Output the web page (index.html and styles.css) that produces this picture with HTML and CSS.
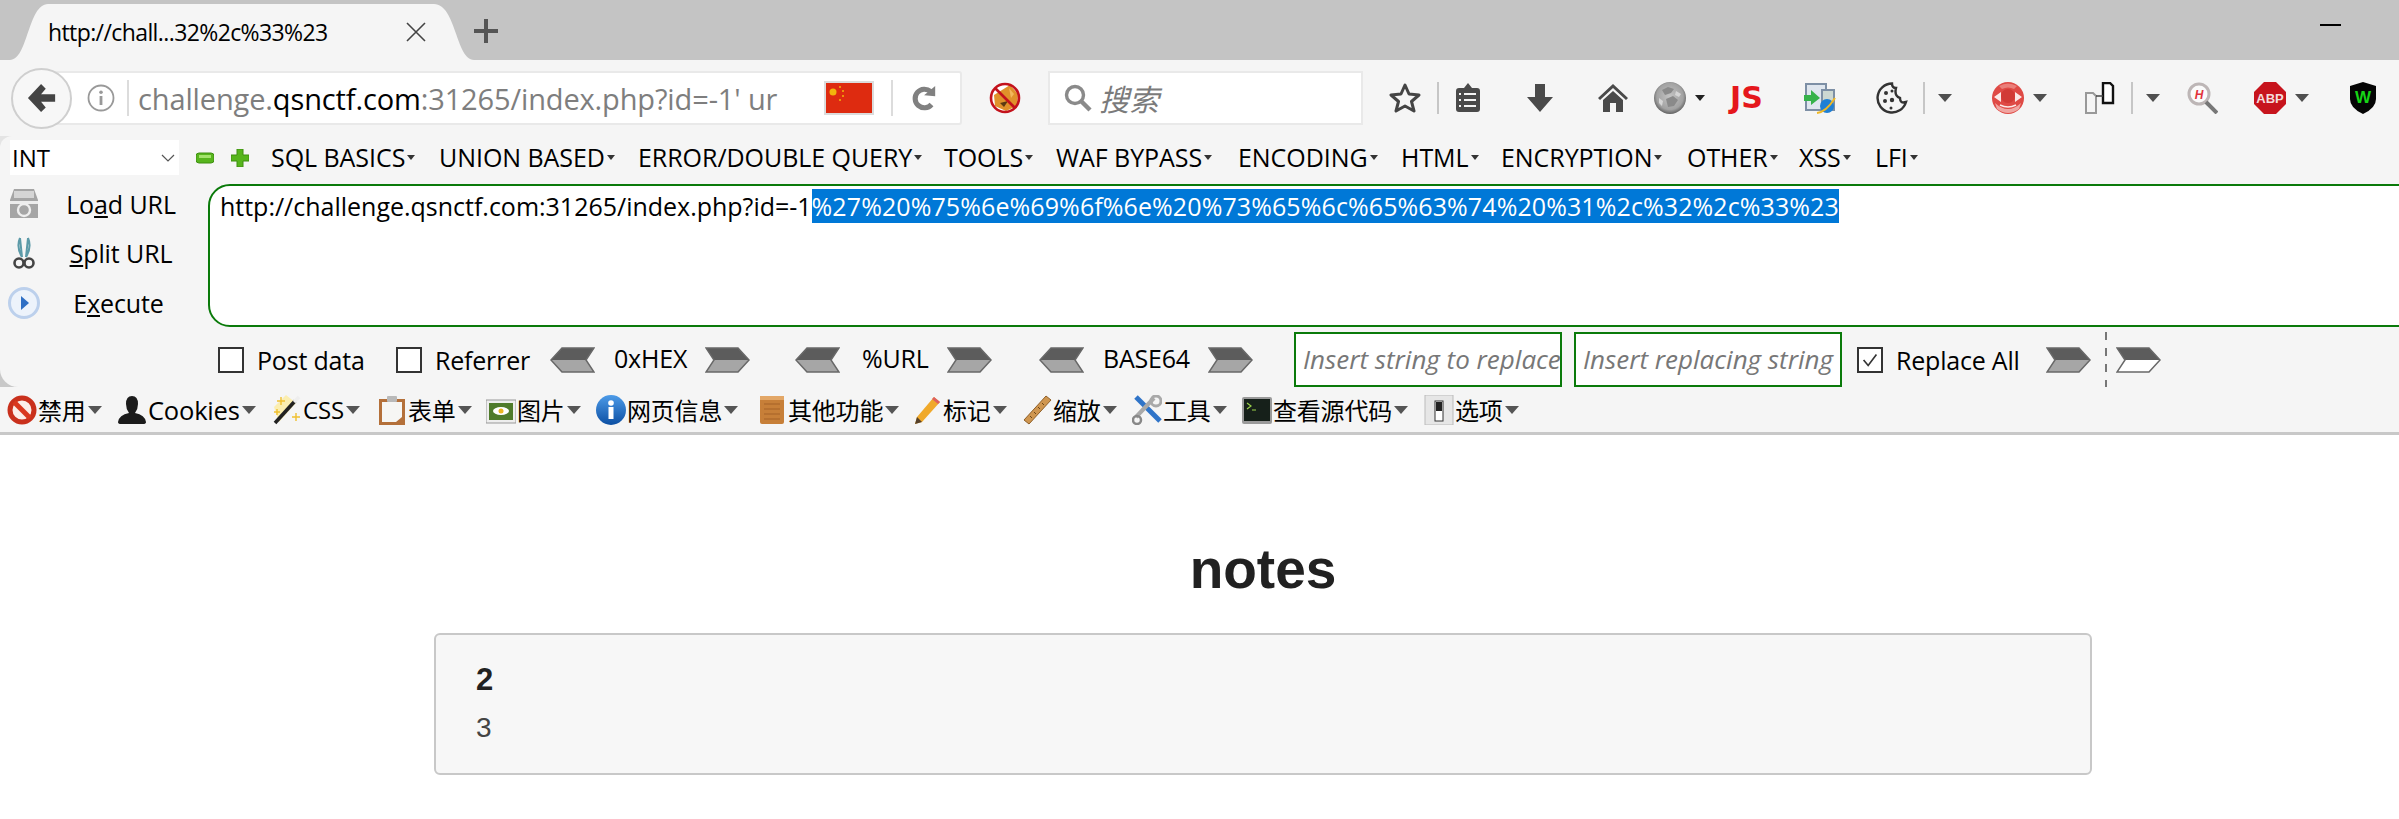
FILE: index.html
```html
<!DOCTYPE html>
<html lang="zh">
<head>
  <meta charset="UTF-8" />
  <title>notes</title>
  <link rel="stylesheet" href="styles.css">
</head>
<body>
  <!-- shared shapes for the hackbar encode arrows -->
  <svg class="defs" aria-hidden="true">
    <symbol id="chevron" viewBox="0 0 45 26">
      <path d="M1 1H33L44 13H9Z" fill="#5c5c5c"/>
      <path d="M9 13H44L33 25H1Z" fill="#a6a6a6"/>
      <path d="M1 1H33L44 13L33 25H1L9 13Z" fill="none" stroke="#686868" stroke-width="1.500"/>
    </symbol>
    <symbol id="chevron-flat" viewBox="0 0 45 26">
      <path d="M1 1H33L44 13H9Z" fill="#5c5c5c"/>
      <path d="M9 13H44L33 25H1Z" fill="#ffffff"/>
      <path d="M1 1H33L44 13L33 25H1L9 13Z" fill="none" stroke="#686868" stroke-width="1.500"/>
    </symbol>
  </svg>

  <!-- tab strip -->
  <div class="tabstrip">
    <div class="tab">
      <span class="tab-title">http://chall...32%2c%33%23</span>
      <svg class="tab-close" viewBox="0 0 20 20"><path d="M1 1L19 19M19 1L1 19" stroke="#444" stroke-width="1.6" fill="none"/></svg>
    </div>
    <svg class="new-tab" viewBox="0 0 24 24"><path d="M12 0V24M0 12H24" stroke="#555" stroke-width="4" fill="none"/></svg>
    <div class="minimize"></div>
  </div>

  <!-- nav bar -->
  <div class="navbar">
    <div class="back">
      <svg viewBox="0 0 32 32"><path d="M15 1L1 16L15 31L20 26L15 20H30V12H15L20 6Z" fill="#444"/></svg>
    </div>
    <div class="urlbar">
      <svg class="info" viewBox="0 0 28 28"><circle cx="14" cy="14" r="12.5" fill="none" stroke="#999" stroke-width="1.8"/><rect x="12.6" y="12" width="2.8" height="9" fill="#999"/><circle cx="14" cy="8.2" r="1.8" fill="#999"/></svg>
      <span class="url-sep"></span>
      <div class="url-text">challenge.<b>qsnctf.com</b>:31265/index.php?id=-1' ur</div>
      <svg class="flag" viewBox="0 0 50 34"><rect width="50" height="34" fill="#dcdcdc"/><rect x="2" y="2" width="46" height="30" fill="#de2b10"/><circle cx="9" cy="11" r="3.5" fill="#f2b50c"/><circle cx="16" cy="6" r="1" fill="#f2b50c"/><circle cx="19" cy="10" r="1" fill="#f2b50c"/><circle cx="19" cy="15" r="1" fill="#f2b50c"/><circle cx="16" cy="19" r="1" fill="#f2b50c"/></svg>
      <span class="url-sep"></span>
      <svg class="reload" viewBox="0 0 28 28"><path d="M20 7A10 10 0 1 0 21 21" fill="none" stroke="#808080" stroke-width="5.500"/><path d="M13 11L25 1V12Z" fill="#808080"/></svg>
    </div>
    <div class="noscript-slot">
      <svg class="ic" viewBox="0 0 32 32"><circle cx="16" cy="16" r="14" fill="#fff"/><path d="M5 13L13 8L21 3L29 12L28 24L17 29L6 24Z" fill="#e0912a"/><path d="M11 21L19 19L15 25Z" fill="#5b3a12"/><path d="M20 6L25 12L22 16Z" fill="#f3b75c"/><circle cx="16" cy="16" r="14" fill="none" stroke="#c3121c" stroke-width="2.600"/><path d="M6 6L26 26" stroke="#c3121c" stroke-width="2.600"/></svg>
    </div>
    <div class="searchbar">
      <svg class="search-ic" viewBox="0 0 28 28"><circle cx="11" cy="11" r="8.5" fill="none" stroke="#8a8a8a" stroke-width="3.4"/><path d="M17 17L26 26" stroke="#8a8a8a" stroke-width="4.4"/></svg>
      <span class="search-text">搜索</span>
    </div>
    <div class="toolbar">
      <svg class="ic" viewBox="0 0 32 32"><path d="M16 3L20 12L30 13L22.500 19.500L25 29L16 24L7 29L9.500 19.500L2 13L12 12Z" fill="none" stroke="#444" stroke-width="3" stroke-linejoin="round"/></svg>
      <span class="sep"></span>
      <svg class="ic" viewBox="0 0 32 32"><path d="M4 9Q4 6 7 6H12L16 1L20 6H25Q28 6 28 9V27Q28 30 25 30H7Q4 30 4 27Z" fill="#4a4a4a"/><path d="M12 12H24M12 18H24M12 24H24M7 12H9M7 18H9M7 24H9" stroke="#f5f5f5" stroke-width="2.200"/></svg>
      <svg class="ic" viewBox="0 0 32 32"><path d="M11 2H21V15H29L16 30L3 15H11Z" fill="#4a4a4a"/></svg>
      <svg class="ic" viewBox="0 0 32 32"><path d="M16 2L31 16L29 18L16 6L3 18L1 16Z" fill="#4a4a4a"/><path d="M6 18L16 9L26 18V30H19V21H13V30H6Z" fill="#4a4a4a"/></svg>
      <svg class="ic" viewBox="0 0 32 32"><defs><radialGradient id="gl" cx="0.5" cy="0.45" r="0.55"><stop offset="0" stop-color="#c4c4c4"/><stop offset="0.75" stop-color="#a2a2a2"/><stop offset="1" stop-color="#616161"/></radialGradient></defs><circle cx="16" cy="16" r="16" fill="url(#gl)"/><path d="M8 8L14 5L20 7L17 11L11 13ZM12 17L19 14L24 18L20 24L14 25Z" fill="#8a8a8a"/><path d="M22 9L27 12L25 15L21 13ZM5 16L9 19L8 24L5 21Z" fill="#d6d6d6"/></svg>
      <span class="caret small"></span>
      <span class="js">JS</span>
      <svg class="ic" viewBox="0 0 32 32"><rect x="2" y="2" width="20" height="26" fill="#dfe6ee" stroke="#7d8fa5" stroke-width="2"/><rect x="18" y="8" width="12" height="20" fill="#cdd8d2" stroke="#7d8fa5" stroke-width="2"/><path d="M0 13H7V8L16 16L7 23V19H0Z" fill="#36b24a"/><circle cx="23" cy="24" r="7" fill="#1f7fd4"/><path d="M13 31Q22 30 31 16" fill="none" stroke="#efb824" stroke-width="2"/></svg>
      <svg class="ic" viewBox="0 0 32 32"><path d="M16 1.500A14.500 14.500 0 1 0 30 20Q24 22 24 16Q18 14 20 6Q16 6 16 1.500Z" fill="#f4f4f4" stroke="#333" stroke-width="2.400"/><circle cx="10" cy="11" r="2" fill="#333"/><circle cx="16" cy="9" r="1.500" fill="#333"/><circle cx="9" cy="19" r="2" fill="#333"/><circle cx="16" cy="18" r="2.200" fill="#333"/><circle cx="15" cy="26" r="1.500" fill="#333"/></svg>
      <span class="sep"></span>
      <span class="caret"></span>
      <svg class="ic" viewBox="0 0 32 32"><circle cx="16" cy="16" r="16" fill="#df4a45"/><path d="M3 21Q16 33 29 21L27 27Q16 35 5 27Z" fill="#f0a5a1"/><path d="M7 4Q16 -1 25 4L22 7Q16 4 10 7Z" fill="#ea7f7a"/><circle cx="16" cy="14" r="7" fill="#d13b36"/><path d="M2 15L9 10V20ZM30 15L23 10V20Z" fill="#fbe9e7"/><path d="M8 23Q16 27 24 23" fill="none" stroke="#fbe9e7" stroke-width="1.600"/></svg>
      <span class="caret"></span>
      <svg class="ic" viewBox="0 0 32 32"><path d="M2 11H9L12 14V31H2Z" fill="#f5f5f5" stroke="#999" stroke-width="2"/><path d="M19 1H26L29 4V21H19Z" fill="#fff" stroke="#111" stroke-width="2.400"/><path d="M12 14H19" stroke="#444" stroke-width="1.500"/></svg>
      <span class="sep"></span>
      <span class="caret"></span>
      <svg class="ic" viewBox="0 0 32 32"><circle cx="13" cy="12" r="10" fill="#fbfbfb" stroke="#bdb6b6" stroke-width="3"/><path d="M20 20L31 31" stroke="#777" stroke-width="4"/><text class="h-mark" x="13" y="17">H</text></svg>
      <svg class="ic" viewBox="0 0 32 32"><path d="M10 0H22L32 10V22L22 32H10L0 22V10Z" fill="#c7141d"/><text class="abp-mark" x="16" y="21">ABP</text></svg>
      <span class="caret"></span>
      <svg class="ic" viewBox="0 0 32 32"><path d="M16 0L29 4V17Q29 26 16 32Q3 26 3 17V4Z" fill="#050505"/><text class="w-mark" x="16" y="21">W</text></svg>
    </div>
  </div>

  <!-- hackbar -->
  <div class="hackbar-wrap">
    <div class="hackbar">
      <div class="hack-menu">
        <div class="select">INT
          <svg class="chev" viewBox="0 0 14 8"><path d="M1 1L7 7L13 1" fill="none" stroke="#555" stroke-width="1.200"/></svg>
        </div>
        <svg class="pm" viewBox="0 0 18 18"><rect x="0" y="4" width="18" height="10" rx="3" fill="#57b51d" stroke="#3e8f10"/><rect x="3" y="6" width="12" height="3" fill="#a3e36b"/></svg>
        <svg class="pm" viewBox="0 0 18 18"><path d="M6 0H12V6H18V12H12V18H6V12H0V6H6Z" fill="#57b51d" stroke="#3e8f10" stroke-linejoin="round"/></svg>
        <span class="mi">SQL BASICS<i></i></span>
        <span class="mi">UNION BASED<i></i></span>
        <span class="mi">ERROR/DOUBLE QUERY<i></i></span>
        <span class="mi">TOOLS<i></i></span>
        <span class="mi">WAF BYPASS<i></i></span>
        <span class="mi">ENCODING<i></i></span>
        <span class="mi">HTML<i></i></span>
        <span class="mi">ENCRYPTION<i></i></span>
        <span class="mi">OTHER<i></i></span>
        <span class="mi">XSS<i></i></span>
        <span class="mi">LFI<i></i></span>
      </div>

      <div class="hack-main">
        <div class="hack-btns">
          <div class="hack-btn">
            <svg class="ic" viewBox="0 0 32 32"><path d="M6 1H26L30 12V30H2V12Z" fill="#a5a5a5"/><rect x="6" y="3" width="20" height="7" fill="#d5d5d5"/><rect x="2" y="13" width="28" height="3" fill="#ececec"/><circle cx="16" cy="22" r="6" fill="none" stroke="#eee" stroke-width="2.400"/></svg>
            <span class="btn-label">Lo<u>a</u>d URL</span>
          </div>
          <div class="hack-btn">
            <svg class="ic" viewBox="0 0 32 32"><path d="M12 1L14 20M20 1L18 20M12 1Q8 10 14 20M20 1Q24 10 18 20" fill="none" stroke="#5c9aa8" stroke-width="2"/><circle cx="11" cy="26" r="4.500" fill="none" stroke="#444" stroke-width="2.600"/><circle cx="21" cy="26" r="4.500" fill="none" stroke="#444" stroke-width="2.600"/></svg>
            <span class="btn-label"><u>S</u>plit URL</span>
          </div>
          <div class="hack-btn">
            <svg class="ic" viewBox="0 0 32 32"><circle cx="16" cy="16" r="14.500" fill="#edf3fb" stroke="#bcd0ec" stroke-width="3"/><path d="M13 9L21 16L13 23Z" fill="#2f6fc4"/></svg>
            <span class="btn-label exec">E<u>x</u>ecute</span>
          </div>
        </div>
        <div class="url-box">http://challenge.qsnctf.com:31265/index.php?id=-1<span class="sel">%27%20%75%6e%69%6f%6e%20%73%65%6c%65%63%74%20%31%2c%32%2c%33%23</span></div>
      </div>

      <div class="hack-opts">
        <span class="check"></span>
        <span class="lbl">Post data</span>
        <span class="check"></span>
        <span class="lbl">Referrer</span>
        <svg class="arrow flip"><use href="#chevron"/></svg>
        <span class="enc">0xHEX</span>
        <svg class="arrow"><use href="#chevron"/></svg>
        <svg class="arrow flip"><use href="#chevron"/></svg>
        <span class="enc">%URL</span>
        <svg class="arrow"><use href="#chevron"/></svg>
        <svg class="arrow flip"><use href="#chevron"/></svg>
        <span class="enc">BASE64</span>
        <svg class="arrow"><use href="#chevron"/></svg>
        <div class="replace-box">Insert string to replace</div>
        <div class="replace-box">Insert replacing string</div>
        <span class="check checked"><svg viewBox="0 0 24 24"><path d="M5 12L10 18L19 6" fill="none" stroke="#333" stroke-width="1.800"/></svg></span>
        <span class="lbl">Replace All</span>
        <svg class="arrow"><use href="#chevron"/></svg>
        <span class="dash"></span>
        <svg class="arrow"><use href="#chevron-flat"/></svg>
      </div>
    </div>
  </div>

  <!-- web developer toolbar -->
  <div class="webdev">
    <div class="wd">
      <svg class="wd-ic" viewBox="0 0 30 30"><circle cx="15" cy="15" r="12" fill="#fbeee9" stroke="#c9301c" stroke-width="5"/><path d="M7 7L23 23" stroke="#d9381f" stroke-width="5"/></svg>
      <span>禁用</span><i></i>
    </div>
    <div class="wd">
      <svg class="wd-ic" viewBox="0 0 30 30"><path d="M15 1Q21 1 21 9Q21 14 18 18Q28 20 29 27Q29 29 26 29H4Q1 29 1 27Q2 20 12 18Q9 14 9 9Q9 1 15 1Z" fill="#1c1c1c"/></svg>
      <span class="wide">Cookies</span><i></i>
    </div>
    <div class="wd">
      <svg class="wd-ic" viewBox="0 0 30 30"><path d="M2 12L7 27L24 8L14 0Z" fill="#fbeeb0"/><path d="M3 28L23 6" stroke="#222" stroke-width="3.600"/><path d="M22 7L27 2" stroke="#eee" stroke-width="3.600"/><path d="M9 2V10M5 6H13M24 18V26M20 22H28M5 14V20M2 17H8" stroke="#f0c030" stroke-width="1.400"/></svg>
      <span>CSS</span><i></i>
    </div>
    <div class="wd">
      <svg class="wd-ic" viewBox="0 0 30 30"><rect x="2" y="4" width="26" height="26" fill="#b4703a"/><path d="M5 7H25V22L19 27H5Z" fill="#f6f6f4"/><rect x="10" y="1" width="10" height="6" rx="1" fill="#b9b9b9"/></svg>
      <span>表单</span><i></i>
    </div>
    <div class="wd">
      <svg class="wd-ic" viewBox="0 0 30 30"><rect x="0" y="5" width="30" height="23" fill="#eee" stroke="#999"/><rect x="3" y="8" width="24" height="17" fill="#4f7b2b"/><ellipse cx="15" cy="16" rx="8" ry="4" fill="#fff"/><circle cx="15" cy="16" r="2.500" fill="#e9b521"/></svg>
      <span>图片</span><i></i>
    </div>
    <div class="wd">
      <svg class="wd-ic" viewBox="0 0 30 30"><defs><linearGradient id="bl" x1="0" y1="0" x2="0" y2="1"><stop offset="0" stop-color="#4d9be8"/><stop offset="1" stop-color="#0c4fa3"/></linearGradient></defs><circle cx="15" cy="15" r="15" fill="url(#bl)"/><rect x="12.500" y="12" width="5" height="12" fill="#fff"/><circle cx="15" cy="8" r="2.800" fill="#fff"/></svg>
      <span>网页信息</span><i></i>
    </div>
    <div class="wd">
      <svg class="wd-ic" viewBox="0 0 30 30"><rect x="3" y="1" width="24" height="28" rx="2" fill="#c77f38"/><rect x="3" y="1" width="24" height="4" fill="#e3a767"/><path d="M7 9H23M7 14H23M7 19H23M7 24H23" stroke="#a66226" stroke-width="1.200"/></svg>
      <span>其他功能</span><i></i>
    </div>
    <div class="wd">
      <svg class="wd-ic" viewBox="0 0 30 30"><path d="M22 2L28 7L10 27L3 29L5 22Z" fill="#f0a92a"/><path d="M22 2L28 7L26 9L20 4Z" fill="#de5f5f"/><path d="M3 29L5 22L10 27Z" fill="#55402b"/></svg>
      <span>标记</span><i></i>
    </div>
    <div class="wd">
      <svg class="wd-ic" viewBox="0 0 30 30"><path d="M24 1L29 5L7 29L2 25Z" fill="#cf9650" stroke="#8f5f28"/><path d="M20 8L22 10M16 12L18 14M12 17L14 19M8 21L10 23" stroke="#6b4519"/></svg>
      <span>缩放</span><i></i>
    </div>
    <div class="wd">
      <svg class="wd-ic" viewBox="0 0 30 30"><path d="M4 2L28 26" stroke="#2f74c8" stroke-width="5"/><path d="M22 3L4 22" stroke="#a9a9a9" stroke-width="4"/><circle cx="24" cy="6" r="5" fill="none" stroke="#a9a9a9" stroke-width="3"/><circle cx="5" cy="25" r="4" fill="none" stroke="#888" stroke-width="2.500"/></svg>
      <span>工具</span><i></i>
    </div>
    <div class="wd">
      <svg class="wd-ic" viewBox="0 0 30 30"><rect x="0" y="2" width="30" height="27" rx="2" fill="#9a9a9a"/><rect x="2" y="4" width="26" height="22" fill="#16201a"/><path d="M5 8L9 11L5 14M10 15H14" fill="none" stroke="#9bd24a" stroke-width="1.200"/></svg>
      <span>查看源代码</span><i></i>
    </div>
    <div class="wd">
      <svg class="wd-ic" viewBox="0 0 30 30"><rect x="1" y="0" width="28" height="30" fill="#e6e6e6" stroke="#bbb"/><rect x="11" y="6" width="8" height="20" fill="#fff" stroke="#333"/><rect x="12" y="7" width="6" height="9" fill="#222"/></svg>
      <span>选项</span><i></i>
    </div>
  </div>

  <!-- page -->
  <div class="page">
    <h1>notes</h1>
    <div class="note">
      <h4>2</h4>
      <p>3</p>
    </div>
  </div>
</body>
</html>
```

FILE: styles.css
```css
html, body {
  margin: 0;
  height: 819px;
  overflow: hidden;
  background: #ffffff;
}

body {
  font-family: "Open Sans", "Noto Sans CJK SC", sans-serif;
  color: #000;
}

.defs {
  display: none;
}

.ic {
  width: 32px;
  height: 32px;
  display: block;
}

/* tab strip */
.tabstrip {
  height: 60px;
  padding-top: 4px;
  box-sizing: border-box;
  background: #c4c4c4;
  display: flex;
  align-items: center;
}

.tab {
  width: 464px;
  height: 56px;
  margin-left: 10px;
  background: #f5f5f5;
  clip-path: path("M0 56C18 56 18 0 38 0H424C446 0 446 56 464 56Z");
  display: flex;
  align-items: center;
  padding-left: 38px;
  box-sizing: border-box;
}

.tab-title {
  width: 358px;
  font-size: 23px;
  letter-spacing: -0.6px;
  white-space: nowrap;
}

.tab-close {
  width: 20px;
  height: 20px;
}

.new-tab {
  width: 24px;
  height: 24px;
  margin-top: -2px;
}

.minimize {
  width: 21px;
  height: 2px;
  background: #000;
  margin-left: auto;
  margin-right: 58px;
  margin-top: -14px;
}

/* nav bar */
.navbar {
  height: 76px;
  background: #f5f5f5;
  display: flex;
  align-items: center;
}

.back {
  width: 61px;
  height: 61px;
  margin-left: 11px;
  box-sizing: border-box;
  border: 2px solid #cfcfcf;
  border-radius: 50%;
  background: #f7f7f7;
  position: relative;
  z-index: 1;
  display: flex;
  align-items: center;
  justify-content: center;
}

.back svg {
  width: 30px;
  height: 30px;
}

.urlbar {
  width: 932px;
  height: 54px;
  margin-left: -42px;
  box-sizing: border-box;
  padding-left: 55px;
  background: #fff;
  border: 2px solid #e9e9e9;
  border-radius: 0 3px 3px 0;
  display: flex;
  align-items: center;
}

.info {
  width: 28px;
  height: 28px;
}

.url-sep {
  width: 2px;
  height: 36px;
  background: #dcdcdc;
  margin-left: 12px;
}

.url-text {
  width: 686px;
  margin-left: 9px;
  font-size: 29px;
  color: #7e7e7e;
  white-space: nowrap;
  letter-spacing: -0.13px;
}

.url-text b {
  font-weight: 400;
  color: #000;
}

.flag {
  width: 50px;
  height: 34px;
}

.urlbar .flag + .url-sep {
  margin-left: 17px;
}

.reload {
  width: 26px;
  height: 26px;
  margin-left: 19px;
}

.noscript-slot {
  width: 86px;
  display: flex;
  justify-content: center;
}

.searchbar {
  width: 315px;
  height: 54px;
  box-sizing: border-box;
  background: #fff;
  border: 2px solid #e9e9e9;
  display: flex;
  align-items: center;
  padding-left: 14px;
}

.search-ic {
  width: 28px;
  height: 28px;
}

.search-text {
  margin-left: 7px;
  font-size: 30px;
  font-style: italic;
  color: #7b7b7b;
  font-family: "Noto Sans CJK SC", sans-serif;
}

.toolbar {
  margin-left: 26px;
  display: grid;
  grid-template-columns: 48px 15px 72px 73px 57px 41px 35px 74px 72px 47px 15px 54px 41px 51px 47px 15px 40px 68px 41px 52px 32px;
  align-items: center;
  justify-items: start;
}

.sep {
  width: 2px;
  height: 32px;
  background: #c6c6c6;
}

.caret {
  width: 0;
  height: 0;
  border-left: 7px solid transparent;
  border-right: 7px solid transparent;
  border-top: 8px solid #4f4f4f;
}

.caret.small {
  border-left-width: 5px;
  border-right-width: 5px;
  border-top-width: 6px;
  border-top-color: #222;
}

.js {
  font-family: "DejaVu Sans", sans-serif;
  font-weight: 700;
  font-size: 30px;
  line-height: 32px;
  color: #e5171c;
  letter-spacing: 0;
}

.h-mark {
  font: italic 700 12px "Liberation Sans", sans-serif;
  fill: #e2333a;
  text-anchor: middle;
}

.abp-mark {
  font: 700 13px "Liberation Sans", sans-serif;
  fill: #f4dcdc;
  text-anchor: middle;
}

.w-mark {
  font: 700 17px "Liberation Sans", sans-serif;
  fill: #16d516;
  text-anchor: middle;
}

/* hackbar */
.hackbar-wrap {
  background: linear-gradient(#e4e4e4 50%, #c8c8c8 50%);
}

.hackbar {
  height: 251px;
  background: #f5f5f5;
  border-radius: 12px 0 0 18px;
  box-sizing: border-box;
  padding-top: 4px;
}

.hack-menu {
  height: 35px;
  padding-left: 10px;
  display: grid;
  grid-template-columns: 186px 35px 40px 168px 199px 306px 112px 182px 163px 100px 186px 112px 76px auto;
  align-items: center;
  justify-items: start;
  font-size: 25px;
  white-space: nowrap;
  letter-spacing: -0.05px;
}

.select {
  width: 169px;
  height: 35px;
  background: #fff;
  padding-left: 2px;
  box-sizing: border-box;
  display: flex;
  align-items: center;
  justify-content: space-between;
  font-size: 24px;
}

.chev {
  width: 14px;
  height: 8px;
  margin-right: 4px;
}

.pm {
  width: 18px;
  height: 18px;
}

.mi {
  display: flex;
  align-items: center;
  margin-top: -2px;
}

.mi i {
  width: 0;
  height: 0;
  margin-left: 2px;
  margin-top: 2px;
  border-left: 4px solid transparent;
  border-right: 4px solid transparent;
  border-top: 5px solid #333;
}

.hack-main {
  margin-top: 9px;
  height: 143px;
  display: grid;
  grid-template-columns: 208px 1fr;
}

.hack-btns {
  margin-top: -5px;
  display: grid;
  grid-auto-rows: 49.500px;
  align-items: center;
}

.hack-btn {
  display: flex;
  align-items: center;
  padding-left: 8px;
}

.btn-label {
  width: 162px;
  text-align: center;
  font-size: 25px;
  letter-spacing: -0.1px;
}

.btn-label.exec {
  width: 157px;
}

.url-box {
  width: 2210px;
  height: 143px;
  box-sizing: border-box;
  background: #fff;
  border: 2px solid #0a7a0a;
  border-radius: 22px 0 0 22px;
  padding: 4px 0 0 10px;
  font-size: 25px;
  line-height: 32px;
  white-space: nowrap;
  letter-spacing: -0.01px;
}

.sel {
  background: #0078d7;
  color: #fff;
  letter-spacing: 0.1px;
}

.hack-opts {
  height: 55px;
  margin-top: 5px;
  padding-left: 218px;
  display: grid;
  grid-template-columns: 39px 139px 39px 115px 64px 91px 90px 67px 85px 92px 64px 105px 86px 280px 283px 39px 150px 59px 11px auto;
  align-items: center;
  justify-items: start;
  font-size: 25px;
  white-space: nowrap;
  letter-spacing: -0.2px;
}

.check {
  width: 26px;
  height: 26px;
  box-sizing: border-box;
  border: 2px solid #333;
  background: #fff;
}

.check svg {
  display: block;
  width: 22px;
  height: 22px;
}

.enc {
  margin-top: -4px;
}

.arrow {
  width: 45px;
  height: 26px;
  display: block;
}

.arrow.flip {
  transform: scaleX(-1);
}

.replace-box {
  width: 268px;
  height: 55px;
  box-sizing: border-box;
  border: 2px solid #0a7a0a;
  background: #fff;
  padding-left: 7px;
  line-height: 51px;
  font-size: 26px;
  font-style: italic;
  letter-spacing: 0;
  color: #777;
  overflow: hidden;
}

.dash {
  height: 55px;
  width: 2px;
  background: repeating-linear-gradient(#777 0 8px, transparent 8px 16px);
}

/* web developer toolbar */
.webdev {
  height: 48px;
  box-sizing: border-box;
  padding-left: 7px;
  background: #f5f5f5;
  border-bottom: 3px solid #c8c8c8;
  display: grid;
  grid-template-columns: 110px 155px 105px 109px 110px 161px 155px 110px 110px 110px 182px auto;
  align-items: center;
  justify-items: start;
  font-size: 24px;
  letter-spacing: -0.2px;
}

.wd {
  display: flex;
  align-items: center;
  white-space: nowrap;
}

.wd .wide {
  font-size: 25.500px;
}

.wd-ic {
  width: 30px;
  height: 30px;
  margin-right: 1px;
}

.wd i {
  width: 0;
  height: 0;
  margin-left: 2px;
  border-left: 7px solid transparent;
  border-right: 7px solid transparent;
  border-top: 8px solid #555;
}

/* page content */
.page {
  width: 1658px;
  margin-left: 434px;
  font-family: "Liberation Sans", sans-serif;
  color: #212121;
}

.page h1 {
  margin: 104px 0 34px;
  font-size: 55px;
  line-height: 60px;
  text-align: center;
}

.note {
  height: 142px;
  box-sizing: border-box;
  padding: 25px 40px 0;
  background: #f7f7f7;
  border: 2px solid #c8c8c8;
  border-radius: 6px;
}

.note h4 {
  margin: 0;
  font-size: 31px;
  line-height: 40px;
}

.note p {
  margin: 8px 0 0;
  font-size: 28px;
  line-height: 40px;
  color: #444;
}
```
